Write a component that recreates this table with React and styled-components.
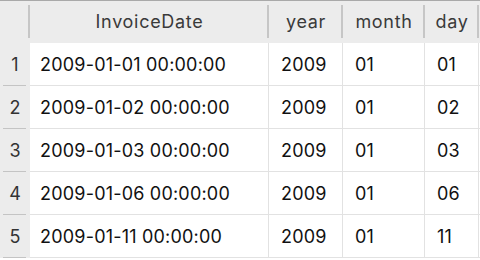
import React from 'react'
import styled, { createGlobalStyle } from 'styled-components'

const Global = createGlobalStyle`
  body {
    margin: 0;
    background: #ffffff;
    font-family: Inter, "Noto Sans", sans-serif;
  }
`

const rows = [
  ['2009-01-01 00:00:00', '2009', '01', '01'],
  ['2009-01-02 00:00:00', '2009', '01', '02'],
  ['2009-01-03 00:00:00', '2009', '01', '03'],
  ['2009-01-06 00:00:00', '2009', '01', '06'],
  ['2009-01-11 00:00:00', '2009', '01', '11'],
]

const cols = [
  { name: 'InvoiceDate', pad: 10 },
  { name: 'year', pad: 12 },
  { name: 'month', pad: 12 },
  { name: 'day', pad: 12 },
]

const Grid = styled.div`
  display: grid;
  grid-template-columns: 30px 239px 74px 82px 54px 1fr;
  grid-auto-rows: 43px;
  grid-template-rows: 42px;
  width: 480px;
  height: 260px;
  overflow: hidden;
  border-top: 1px solid #a9a9a9;
  box-sizing: border-box;
`

const HeadCell = styled.div`
  background: #ececec;
  display: flex;
  align-items: center;
  justify-content: center;
  position: relative;
  font-size: 18px;
  letter-spacing: 0.7px;
  color: #3a3a3a;
  padding-bottom: 1px;

  &::after {
    content: '';
    position: absolute;
    right: 0;
    top: 4px;
    bottom: 5px;
    width: 2px;
    background: ${(p) => (p.$noSep ? 'transparent' : '#c6c6c6')};
  }
`

const NumCell = styled.div`
  background: #ececec;
  display: flex;
  align-items: center;
  justify-content: center;
  position: relative;
  font-size: 18px;
  color: #333333;

  &::after {
    content: '';
    position: absolute;
    left: 3px;
    right: 4px;
    bottom: 0;
    height: 1px;
    background: #c4c4c4;
  }
`

const Cell = styled.div`
  display: flex;
  align-items: center;
  padding-left: ${(p) => p.$pad}px;
  border-right: 1px solid #e2e2e2;
  border-bottom: 1px solid #e2e2e2;
  font-size: 18px;
  letter-spacing: 0.2px;
  color: #111111;
  white-space: nowrap;
`

const Filler = styled.div`
  background: ${(p) => (p.$head ? '#ececec' : '#ffffff')};
  border-bottom: ${(p) => (p.$head ? 'none' : '1px solid #e2e2e2')};
`

export default function App() {
  return (
    <>
      <Global />
      <Grid>
        <HeadCell />
        {cols.map((c) => (
          <HeadCell key={c.name}>{c.name}</HeadCell>
        ))}
        <Filler $head />
        {rows.map((r, i) => (
          <React.Fragment key={i}>
            <NumCell>{i + 1}</NumCell>
            {r.map((v, j) => (
              <Cell key={j} $pad={cols[j].pad}>{v}</Cell>
            ))}
            <Filler />
          </React.Fragment>
        ))}
      </Grid>
    </>
  )
}
